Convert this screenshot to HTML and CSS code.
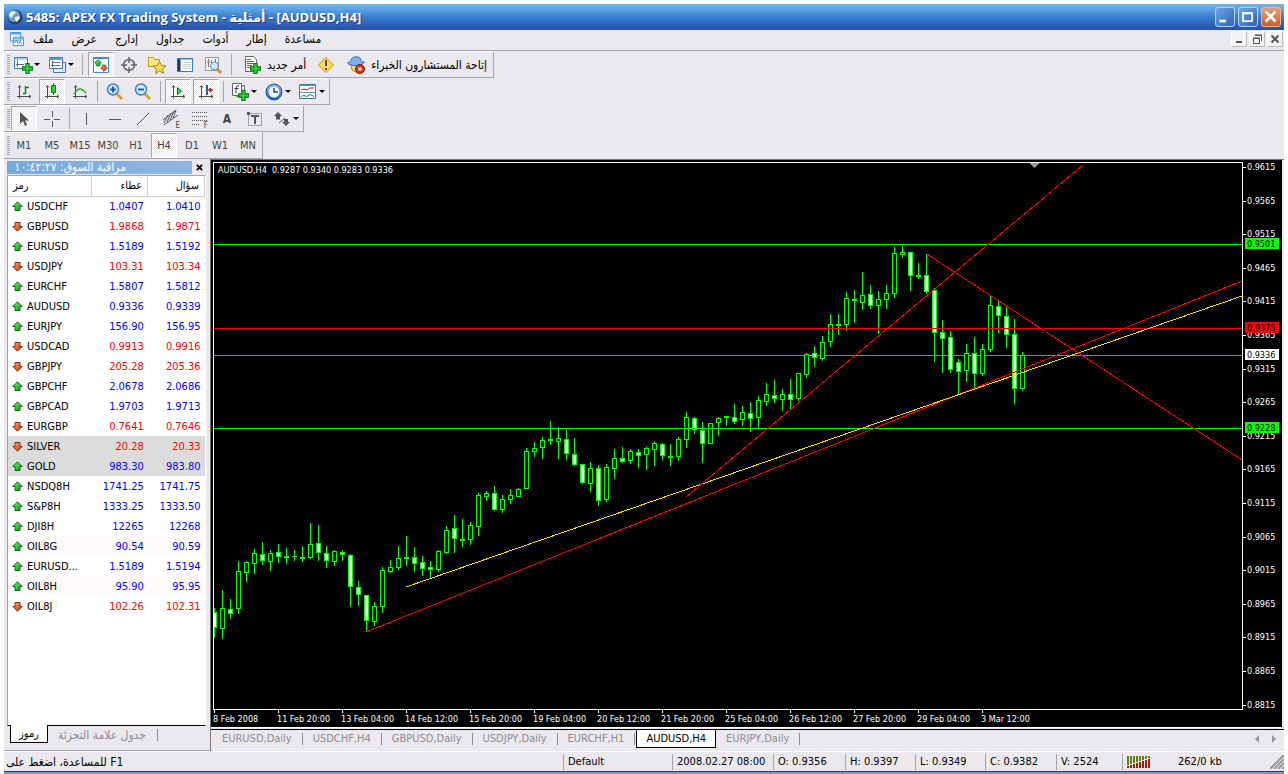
FILE: index.html
```html
<!DOCTYPE html>
<html lang="en">
<head>
    <meta charset="UTF-8">
    <meta name="viewport" content="width=device-width, initial-scale=1.0">
    <title>5485: APEX FX Trading System</title>
    <link rel="stylesheet" href="styles.css">
</head>
<body>
    <svg class="defs" aria-hidden="true">
        <defs>
            <linearGradient id="blueBall" x1="0" y1="0" x2="0" y2="1">
                <stop offset="0" stop-color="#8fc4f4"/>
                <stop offset="1" stop-color="#1c55b0"/>
            </linearGradient>
            <linearGradient id="greenFill" x1="0" y1="0" x2="1" y2="1">
                <stop offset="0" stop-color="#7df07d"/>
                <stop offset="1" stop-color="#009a10"/>
            </linearGradient>
            <linearGradient id="redFill" x1="0" y1="0" x2="1" y2="1">
                <stop offset="0" stop-color="#ffb070"/>
                <stop offset="1" stop-color="#c03000"/>
            </linearGradient>
            <symbol id="plus" viewBox="0 0 10 10"><path d="M3.5.5h3v3h3v3h-3v3h-3v-3h-3v-3h3z" fill="#2fd03a" stroke="#087a12"/></symbol>
            <symbol id="up" viewBox="0 0 11 11"><path d="M5.5.8L10.2 5.500H8v4H3v-4H.8z" fill="url(#greenFill)" stroke="#0a6a14"/></symbol>
            <symbol id="down" viewBox="0 0 11 11"><path d="M5.500 10.200L.8 5.500H3v-4h5v4h2.200z" fill="url(#redFill)" stroke="#8a2a10"/></symbol>
            <symbol id="axes" viewBox="0 0 20 20"><path d="M5.500 4v12.500M3 14.500h13M4 5.500l1.500-2 1.500 2M15 13l2 1.500-2 1.500" fill="none" stroke="#4a4a4a"/></symbol>
        </defs>
    </svg>

    <div class="window">
        <header class="titlebar">
            <svg class="globe" viewBox="0 0 16 16"><circle cx="8" cy="8" r="7.500" fill="#26425f"/><circle cx="7" cy="7" r="6" fill="#6f9fc8"/><path d="M3 3l4-1 2 2-3 2-1 3-3-2zM8 8l4-1 1 2-3 4-2-2z" fill="#e8f0ea"/></svg>
            <h1>5485: APEX FX Trading System - أمثلية - [AUDUSD,H4]</h1>
            <button class="win-btn" aria-label="Minimize"><svg viewBox="0 0 20 20"><path d="M4 13h7v3H4z" fill="#fff"/></svg></button>
            <button class="win-btn" aria-label="Maximize"><svg viewBox="0 0 20 20"><path d="M4.500 5.500h10v9h-10zM4 6h11" fill="none" stroke="#fff" stroke-width="2"/></svg></button>
            <button class="win-btn close" aria-label="Close"><svg viewBox="0 0 20 20"><path d="M4 4l11 11M15 4L4 15" stroke="#fff" stroke-width="3"/></svg></button>
        </header>

        <nav class="menubar">
            <svg class="doc-icon" viewBox="0 0 16 16"><path d="M1.500.5h11v9h-11zM4.500 5.500h11v9h-11z" fill="#fff" stroke="#3f86cc"/><path d="M1 2h11M5 7h11" stroke="#6bb0ee" stroke-width="2"/><path d="M6 12l2-3 2 4 2-3 2 3" fill="none" stroke="#3f86cc"/></svg>
            <button>ملف</button>
            <button>عرض</button>
            <button>إدارج</button>
            <button>جداول</button>
            <button>أدوات</button>
            <button>إطار</button>
            <button>مساعدة</button>
            <div class="mdi">
                <button aria-label="Minimize chart"><svg viewBox="0 0 14 14"><path d="M4 10h6" stroke="#555" stroke-width="2"/></svg></button>
                <button aria-label="Restore chart"><svg viewBox="0 0 14 14"><path d="M5 3.500h6.500V9M3.500 6.500h6v5h-6zM5 3h7M3 6h7" fill="none" stroke="#555"/></svg></button>
                <button aria-label="Close chart"><svg viewBox="0 0 14 14"><path d="M3.500 3.500l7 7M10.500 3.500l-7 7" stroke="#555" stroke-width="2"/></svg></button>
            </div>
        </nav>

        <div class="toolbars">
            <div class="toolbar standard">
                <button class="drop" aria-label="New chart"><svg viewBox="0 0 20 20"><path d="M1.500 2.500h13v11h-13z" fill="#fff" stroke="#3c78b4"/><path d="M1 4h14" stroke="#5b9bd8"/><path d="M4.500 5v7M3 9.500h8" stroke="#4d6f94"/><use href="#plus" x="9" y="8" width="11" height="11"/></svg></button>
                <button class="drop" aria-label="Profiles"><svg viewBox="0 0 20 20"><path d="M6.500 7.500h12v10h-12z" fill="#dcebfa" stroke="#3c78b4"/><path d="M2.500 2.500h13v11h-13z" fill="#fff" stroke="#3c78b4"/><path d="M2 4h14" stroke="#5b9bd8" stroke-width="2"/><path d="M5.500 6v6M4 10.500h9M5 7.500h8" stroke="#4d6f94"/></svg></button>
                <i class="sep"></i>
                <button class="on" aria-label="Market watch"><svg viewBox="0 0 20 20"><path d="M2.500 2.500h15v15h-15z" fill="#fff" stroke="#3c8ad8"/><path d="M2 3h16" stroke="#3c8ad8" stroke-width="2"/><use href="#up" x="3" y="4" width="8" height="8"/><use href="#down" x="9" y="9" width="8" height="8"/></svg></button>
                <button aria-label="Data window"><svg viewBox="0 0 20 20" fill="none" stroke="#666"><circle cx="10" cy="10" r="5.500" stroke-width="1.500"/><path d="M10 2v6M10 12v6M2 10h6M12 10h6" stroke-width="1.500"/></svg></button>
                <button aria-label="Navigator"><svg viewBox="0 0 20 20"><path d="M1.500 2.500h5l1 2h5v7h-11z" fill="#ffe98a" stroke="#b8962c"/><path d="M12.500 6.500l2 4 4.500.5-3.500 3 1 4.500-4-2.500-4 2.500 1-4.500-3.500-3 4.500-.5z" fill="#ffdc4e" stroke="#a88018"/></svg></button>
                <button aria-label="Terminal"><svg viewBox="0 0 20 20"><path d="M2.500 3.500h15v13h-15z" fill="#fff" stroke="#2f7fd0"/><path d="M4 4v12" stroke="#123a70" stroke-width="3"/><path d="M3 4h15" stroke="#2f7fd0"/><path d="M8 7.500h8M8 9.500h8M8 11.500h8M8 13.500h8" stroke="#bcd"/></svg></button>
                <button aria-label="Strategy tester"><svg viewBox="0 0 20 20"><path d="M2.500 2.500h13v13h-13z" fill="#f8f8f8" stroke="#999"/><path d="M5.500 4v8M8.500 5v6M4 7h3M12.500 4v4" stroke="#777"/><path d="M14 14l4 4" stroke="#d09030" stroke-width="3"/><circle cx="11.500" cy="11" r="4" fill="#cfe6fb" stroke="#5d88b4"/></svg></button>
                <i class="sep"></i>
                <button class="wide"><svg viewBox="0 0 20 20"><path d="M3.500 1.500h8l3 3v12h-11z" fill="#fff" stroke="#666"/><path d="M5 6.500h7M5 8.500h7M5 10.500h5M5 12.500h4M5 4.500h4" stroke="#666"/><use href="#plus" x="8" y="8" width="11" height="11"/></svg>أمر جديد</button>
                <button aria-label="Alerts"><svg viewBox="0 0 20 20"><path d="M10 2.500l7.500 7.500-7.500 7.500L2.500 10z" fill="#ffdf50" stroke="#c09020"/><path d="M10 5v6M10 13v2" stroke="#6a4a00" stroke-width="2"/></svg></button>
                <button class="wide"><svg viewBox="0 0 20 20"><path d="M5 9h11l-1 7-4 2-5-3z" fill="#ffd66a" stroke="#b08830"/><path d="M1.500 8c2-1 3-1 4-4 2-3 8-3 9 0 0 2 1 3 4 3-2 4-14 5-17 1z" fill="#7ab4ec" stroke="#3468a8"/><circle cx="14" cy="14" r="4.500" fill="#d8301c" stroke="#8a1408"/><path d="M12.500 12.500h3v3h-3z" fill="#fff"/></svg>إتاحة المستشارون الخبراء</button>
            </div>

            <div class="toolbar">
                <button aria-label="Bar chart"><svg viewBox="0 0 20 20"><use href="#axes" width="20" height="20"/><path d="M11.500 4v8M9 11.500h2.500M11.500 5.500H15" stroke="#0a8a14" stroke-width="1.500"/></svg></button>
                <button class="on" aria-label="Candlesticks"><svg viewBox="0 0 20 20"><use href="#axes" width="20" height="20"/><path d="M11.500 1v12" stroke="#0a6a14"/><path d="M9.500 3.500h4v7h-4z" fill="#1edc2c" stroke="#0a7a14"/></svg></button>
                <button aria-label="Line chart"><svg viewBox="0 0 20 20"><use href="#axes" width="20" height="20"/><path d="M4 12c4-6 7-7 12-1" fill="none" stroke="#2aa834" stroke-width="1.500"/></svg></button>
                <i class="sep"></i>
                <button aria-label="Zoom in"><svg viewBox="0 0 20 20"><path d="M12 12l5 5" stroke="#d8a040" stroke-width="3"/><circle cx="8" cy="7.500" r="5.500" fill="#d8ecff" stroke="#3b7fd0" stroke-width="1.500"/><path d="M5 7.500h6M8 4.500v6" stroke="#1d5cb8" stroke-width="2"/></svg></button>
                <button aria-label="Zoom out"><svg viewBox="0 0 20 20"><path d="M12 12l5 5" stroke="#d8a040" stroke-width="3"/><circle cx="8" cy="7.500" r="5.500" fill="#d8ecff" stroke="#3b7fd0" stroke-width="1.500"/><path d="M5 7.500h6" stroke="#1d5cb8" stroke-width="2"/></svg></button>
                <i class="sep"></i>
                <button class="on" aria-label="Auto scroll"><svg viewBox="0 0 20 20"><use href="#axes" width="20" height="20"/><path d="M9.500 5.500l4 3.500-4 3.500z" fill="#3cd048" stroke="#0a7a14"/></svg></button>
                <button class="on" aria-label="Chart shift"><svg viewBox="0 0 20 20"><use href="#axes" width="20" height="20"/><path d="M11 3v10" stroke="#2060b0" stroke-width="2"/><path d="M17 8h-4M15 6l-2 2 2 2" fill="none" stroke="#a03010" stroke-width="1.500"/></svg></button>
                <i class="sep"></i>
                <button class="drop" aria-label="Indicators"><svg viewBox="0 0 20 20"><path d="M6.500 3.500h8v11h-8z" fill="#ddd" stroke="#777"/><path d="M2.500 1.500h9v12h-9z" fill="#fff" stroke="#666"/><path d="M9 4c-3-1-3 1-3 7M4.500 6.500h4" fill="none" stroke="#333"/><use href="#plus" x="8" y="8" width="11" height="11"/></svg></button>
                <button class="drop" aria-label="Periods"><svg viewBox="0 0 20 20"><circle cx="10" cy="10" r="8" fill="url(#blueBall)" stroke="#1f4f98"/><circle cx="10" cy="10" r="5.500" fill="#eef6ff"/><path d="M10 6v4h4" fill="none" stroke="#345" stroke-width="1.500"/></svg></button>
                <button class="drop" aria-label="Templates"><svg viewBox="0 0 20 20"><path d="M1.500 2.500h16v14h-16z" fill="#fff" stroke="#3078c0"/><path d="M1 3.500h17M1 10.500h17" stroke="#4f98dc"/><path d="M3 8l3-1 3 1 3-2h4" fill="none" stroke="#a03010"/><path d="M3 14.500l3-1 3 1 3-2 4 2" fill="none" stroke="#0a9a24"/></svg></button>
            </div>

            <div class="toolbar">
                <button class="on" aria-label="Cursor"><svg viewBox="0 0 20 20"><path d="M6 3v12l3-3 2 5 2-1-2-4.500h4z" fill="#555"/></svg></button>
                <button aria-label="Crosshair"><svg viewBox="0 0 20 20"><path d="M10.500 2v6M10.500 12v6M2 10.500h6M12 10.500h6" stroke="#555"/></svg></button>
                <i class="sep"></i>
                <button aria-label="Vertical line"><svg viewBox="0 0 20 20"><path d="M9.500 4v12" stroke="#555"/></svg></button>
                <button aria-label="Horizontal line"><svg viewBox="0 0 20 20"><path d="M4 10.500h12" stroke="#555"/></svg></button>
                <button aria-label="Trendline"><svg viewBox="0 0 20 20"><path d="M4 16L16 4" stroke="#555"/></svg></button>
                <button aria-label="Channel"><svg viewBox="0 0 20 20"><path d="M2 11L15 1M3 16L17 6M3 14l4-8M6 13l4-9M9 11l4-9M12 9l3-8" stroke="#555"/></svg><sub>E</sub></button>
                <button aria-label="Fibonacci"><svg viewBox="0 0 20 20"><path d="M3 3.500h15M3 7.500h15M3 11.500h15M3 15.500h8" stroke="#555" stroke-dasharray="1 1"/></svg><sub>F</sub></button>
                <button class="glyph">A</button>
                <button aria-label="Text label"><svg viewBox="0 0 20 20"><path d="M3.500 4.500h13v12h-13z" fill="none" stroke="#555" stroke-dasharray="1 1"/><path d="M6 7h8M10 7v8" stroke="#555" stroke-width="2"/><path d="M2 3h3v3H2z" fill="#555"/></svg></button>
                <button class="drop" aria-label="Arrows"><svg viewBox="0 0 20 20"><path d="M6 3l4 4-2 .5v3H4v-3L2 7zM14 17l-4-4h2v-3h4v3h2z" fill="#555"/><path d="M7 14l6-5" stroke="#555"/></svg></button>
            </div>

            <div class="toolbar">
                <button>M1</button>
                <button>M5</button>
                <button>M15</button>
                <button>M30</button>
                <button>H1</button>
                <button class="on">H4</button>
                <button>D1</button>
                <button>W1</button>
                <button>MN</button>
            </div>
        </div>

        <main class="workspace">
            <section class="watch">
                <div class="watch-head">
                    <h2 dir="rtl">مراقبة السوق: ١٠:٤٢:٢٧</h2>
                    <button aria-label="Close panel"><svg viewBox="0 0 8 8"><path d="M1 1l6 6M7 1L1 7" stroke="#000" stroke-width="2"/></svg></button>
                </div>
                <div class="watch-list">
                    <table>
                        <thead>
                            <tr><th>رمز</th><th>عطاء</th><th>سؤال</th></tr>
                        </thead>
                        <tbody id="quotes"></tbody>
                    </table>
                </div>
                <div class="watch-tabs">
                    <button class="active">رموز</button>
                    <button>جدول علامة التجزئة</button>
                </div>
            </section>

            <section class="charts">
                <div class="chart">
                    <div class="plot">
                        <svg id="plot"></svg>
                        <p class="chart-title">AUDUSD,H4&nbsp; 0.9287 0.9340 0.9283 0.9336</p>
                    </div>
                    <svg id="prices" class="prices"></svg>
                    <svg id="times" class="times"></svg>
                </div>
                <div class="chart-tabs">
                    <button>EURUSD,Daily</button>
                    <button>USDCHF,H4</button>
                    <button>GBPUSD,Daily</button>
                    <button>USDJPY,Daily</button>
                    <button>EURCHF,H1</button>
                    <button class="active">AUDUSD,H4</button>
                    <button>EURJPY,Daily</button>
                    <svg class="scroll" viewBox="0 0 24 8"><path d="M5 0v8L1 4zM18 0v8l4-4z" fill="#999"/></svg>
                </div>
            </section>
        </main>

        <footer class="status">
            <span class="help">للمساعدة، اضغط على F1</span>
            <span>Default</span>
            <span>2008.02.27 08:00</span>
            <span>O: 0.9356</span>
            <span>H: 0.9397</span>
            <span>L: 0.9349</span>
            <span>C: 0.9382</span>
            <span>V: 2524</span>
            <span class="traffic">
                <svg class="bars" viewBox="0 0 24 12"><path d="M1 0v9M4 0v8M7 0v7M10 0v6M13 0v5M16 0v4M19 0v3M22 0v2" stroke="#5f7f10" stroke-width="2"/><path d="M1 10v2M4 9v3M7 8v4M10 7v5M13 6v6M16 5v7M19 4v8M22 3v9" stroke="#a02010" stroke-width="2"/></svg>
                262/0 kb
                <svg class="size-grip" viewBox="0 0 14 14"><path d="M0 14L14 0M4 14L14 4M8 14l6-6M12 14l2-2" stroke="#999" stroke-width="2"/></svg>
            </span>
        </footer>
    </div>
    <script src="chart.js"></script>
</body>
</html>
```
FILE: styles.css
```css
* {
    box-sizing: border-box;
}
body {
    margin: 0;
    background: #fff;
    font-family: "DejaVu Sans Condensed", "DejaVu Sans", sans-serif;
    font-size: 11px;
    color: #000;
}
h1, h2, p {
    margin: 0;
}
button {
    padding: 0;
    border: none;
    background: none;
    font: inherit;
    color: inherit;
}
svg {
    display: block;
}
.defs {
    position: absolute;
    width: 0;
    height: 0;
}
.window {
    display: flex;
    flex-direction: column;
    min-height: 100vh;
    padding: 4px 4px 0;
}

/* title bar */
.titlebar {
    display: flex;
    align-items: center;
    gap: 3px;
    height: 26px;
    padding: 0 3px;
    background: linear-gradient(#6fb6ea 0, #5ea4e4 20%, #3f83d4 45%, #3674c8 60%, #2c57b0 90%, #2a50a8 100%);
}
.titlebar .globe {
    width: 16px;
    height: 16px;
}
.titlebar h1 {
    flex: 1;
    font-family: "Open Sans", "DejaVu Sans", sans-serif;
    font-size: 13px;
    line-height: 24px;
    color: #fff;
    text-shadow: 1px 1px 0 #1c3c80;
    white-space: nowrap;
}
.win-btn {
    width: 20px;
    height: 20px;
    border: 1px solid #b8d4f4;
    border-radius: 3px;
    background: linear-gradient(135deg, #6ea6e4, #2e62b8);
}
.win-btn.close {
    background: linear-gradient(#e8a080, #d85828);
    border-color: #ffb090;
}

/* menu */
.menubar {
    display: flex;
    align-items: center;
    gap: 18px;
    height: 21px;
    padding: 0 0 2px 5px;
    background: #ebe9ed;
    border-bottom: 1px solid #a5a3a8;
    font-size: 12px;
}
.doc-icon {
    width: 15px;
    height: 15px;
    margin-right: -9px;
}
.mdi {
    display: flex;
    gap: 2px;
    margin-left: auto;
    padding-right: 1px;
}
.mdi button {
    width: 16px;
    height: 16px;
    border: 1px solid #fff;
    border-right-color: #bbb;
    border-bottom-color: #bbb;
    background: #f4f3f5;
}

/* toolbars */
.toolbars {
    background: #ebe9ed;
}
.toolbar {
    display: flex;
    align-items: center;
    width: max-content;
    height: 27px;
    border-top: 1px solid #fff;
    border-right: 1px solid #a5a3a8;
    border-bottom: 1px solid #a5a3a8;
    color: #444;
}
.toolbar::before {
    content: "";
    width: 3px;
    height: 19px;
    margin: 0 0 0 3px;
    background: repeating-linear-gradient(#a8a6aa 0 1px, #ebe9ed 1px 2px);
}
.toolbar button {
    display: flex;
    align-items: center;
    justify-content: center;
    position: relative;
    width: 28px;
    height: 25px;
    border: 1px solid transparent;
}
.toolbar button svg {
    width: 20px;
    height: 20px;
    flex: none;
}
.toolbar .on {
    border-color: #a5a3a8 #fff #fff #a5a3a8;
    background: repeating-conic-gradient(#fff 0 25%, #ebe9ed 0 50%) 0 0 / 2px 2px;
    width: 26px;
    margin: 0 1px;
}
.toolbar .drop {
    width: 34px;
    gap: 1px;
    justify-content: flex-start;
    padding-left: 2px;
}
.toolbar .drop::after {
    content: "";
    border: 3px solid transparent;
    border-top-color: #000;
    border-bottom: none;
}
.toolbar .wide {
    width: auto;
    gap: 5px;
    padding: 0 5px;
    font-size: 12px;
    color: #000;
}
.toolbar .glyph {
    font-size: 12px;
    font-weight: bold;
}
.toolbar sub {
    position: absolute;
    right: 4px;
    bottom: 0;
    font-size: 8px;
}
.sep {
    width: 1px;
    height: 21px;
    margin: 0 3px;
    background: #a5a3a8;
}
.standard .sep {
    margin: 0 4px;
}

/* market watch */
.workspace {
    display: flex;
    flex: 1;
    background: #ebe9ed;
}
.watch {
    display: flex;
    flex-direction: column;
    width: 206px;
    padding: 2px 4px 3px 3px;
    border-bottom: 1px solid #a5a3a8;
}
.watch-head {
    display: flex;
    align-items: center;
    height: 13px;
    margin-bottom: 1px;
}
.watch-head h2 {
    width: 185px;
    padding-right: 66px;
    background: linear-gradient(90deg, #76aadb, #8fb6e4);
    font-size: 12px;
    font-weight: normal;
    line-height: 13px;
    color: #fff;
    white-space: nowrap;
}
.watch-head button {
    margin-left: 4px;
}
.watch-head button svg {
    width: 7px;
    height: 7px;
}
.watch-list {
    flex: 1;
    border: 1px solid #a5a3a8;
    border-right-color: #fff;
    border-bottom-color: #000;
    background: #fff;
}
.watch table {
    width: 100%;
    border-collapse: collapse;
    table-layout: fixed;
}
.watch th {
    height: 20px;
    padding: 0 5px;
    border-right: 1px solid #d0d0d0;
    border-bottom: 1px solid #d0d0d0;
    font-weight: normal;
    text-align: right;
}
.watch th:first-child {
    width: 83px;
    text-align: left;
}
.watch td {
    height: 20px;
    padding: 0 4px;
    line-height: 13px;
    text-align: right;
}
.watch td:first-child {
    text-align: left;
}
.watch td svg {
    display: inline-block;
    width: 11px;
    height: 11px;
    margin-right: 4px;
    vertical-align: -2px;
}
.rise {
    color: #0000ff;
}
.fall {
    color: #ff0000;
}
.symbol {
    color: #000;
}
.picked {
    background: #dcdcdc;
}
.tint {
    background: #fffafa;
}
.watch-tabs {
    display: flex;
    height: 21px;
    font-size: 12px;
    color: #8c8a90;
}
.watch-tabs button {
    height: 12px;
    margin-top: 3px;
    padding: 0 11px 0 10px;
    border-right: 1px solid #8c8a90;
    line-height: 12px;
    white-space: nowrap;
}
.watch-tabs .active {
    height: 18px;
    margin-left: 3px;
    margin-top: -1px;
    padding: 0 8px;
    border: 1px solid #000;
    border-top: none;
    background: #fff;
    font-size: 11px;
    line-height: 18px;
    color: #000;
}

/* chart */
.charts {
    flex: 1;
    display: flex;
    flex-direction: column;
    min-width: 0;
    border-left: 1px solid #77757c;
    border-top: 1px solid #77757c;
}
.chart {
    flex: 1;
    display: grid;
    grid-template-columns: 1fr 39px;
    grid-template-rows: minmax(548px, 1fr) 17px;
    margin-right: 2px;
    padding: 2px 0 0 2px;
    background: #000;
    border-bottom: 1px solid #fff;
}
.plot {
    position: relative;
    border: 1px solid #fff;
    overflow: hidden;
}
.plot svg {
    position: absolute;
    width: 100%;
    height: 100%;
}
.chart-title {
    position: relative;
    padding: 2px 4px;
    font-size: 9px;
    color: #fff;
}
.prices, .times {
    width: 100%;
    height: 100%;
    overflow: visible;
    font-size: 9px;
    fill: #fff;
}
.chart-tabs {
    display: flex;
    align-items: center;
    height: 22px;
    border-top: 1px solid #000;
    margin-top: 1px;
    padding: 0 0 3px 1px;
    color: #8c8a90;
}
.chart-tabs button {
    height: 12px;
    padding: 0 10px;
    border-right: 1px solid #8c8a90;
    line-height: 12px;
}
.chart-tabs .active {
    height: 18px;
    margin-left: 1px;
    padding: 0 9px;
    border: 1px solid #000;
    border-top: none;
    background: #fff;
    color: #000;
}
.chart-tabs .scroll {
    width: 24px;
    height: 8px;
    margin-left: auto;
    margin-right: 6px;
}

/* status bar */
.status {
    display: grid;
    grid-template-columns: 1fr 109px 101px 72px 70px 70px 71px 66px 162px;
    align-items: center;
    height: 24px;
    background: #ebe9ed;
    border-top: 1px solid #fff;
    border-bottom: 3px solid #6e9cd0;
    box-shadow: inset 0 -1px 0 #24406a;
}
.status span {
    height: 16px;
    padding-left: 4px;
    border-left: 1px solid #a5a3a8;
    line-height: 16px;
    white-space: nowrap;
}
.status .help {
    padding-left: 2px;
    border: none;
    font-size: 12px;
}
.status .traffic {
    display: flex;
    align-items: center;
    gap: 27px;
}
.bars {
    width: 24px;
    height: 12px;
}
.size-grip {
    width: 14px;
    height: 14px;
    margin-left: auto;
}
```
FILE: chart.js
```js
const quotes = [
    ['USDCHF', '1.0407', '1.0410', 1],
    ['GBPUSD', '1.9868', '1.9871', 0],
    ['EURUSD', '1.5189', '1.5192', 1],
    ['USDJPY', '103.31', '103.34', 0],
    ['EURCHF', '1.5807', '1.5812', 1],
    ['AUDUSD', '0.9336', '0.9339', 1],
    ['EURJPY', '156.90', '156.95', 1],
    ['USDCAD', '0.9913', '0.9916', 0],
    ['GBPJPY', '205.28', '205.36', 0],
    ['GBPCHF', '2.0678', '2.0686', 1],
    ['GBPCAD', '1.9703', '1.9713', 1],
    ['EURGBP', '0.7641', '0.7646', 0],
    ['SILVER', '20.28', '20.33', 0, 'picked'],
    ['GOLD', '983.30', '983.80', 1, 'picked'],
    ['NSDQ8H', '1741.25', '1741.75', 1],
    ['S&amp;P8H', '1333.25', '1333.50', 1],
    ['DJI8H', '12265', '12268', 1],
    ['OIL8G', '90.54', '90.59', 1, 'tint'],
    ['EURUSD...', '1.5189', '1.5194', 1],
    ['OIL8H', '95.90', '95.95', 1, 'tint'],
    ['OIL8J', '102.26', '102.31', 0]
];

document.getElementById('quotes').innerHTML = quotes.map(([name, bid, ask, up, mark]) =>
    `<tr class="${up ? 'rise' : 'fall'} ${mark || ''}">
        <td class="symbol"><svg><use href="#${up ? 'up' : 'down'}"/></svg>${name}</td>
        <td>${bid}</td><td>${ask}</td>
    </tr>`).join('');

// high, body top, body bottom, low, falling
const candles = [
    [608,612,628,638,1],[590,608,629,639,0],[599,609,614,619,1],[561,571,609,614,0],
    [561,562,573,582,0],[549,553,564,574,0],[542,554,561,565,1],[550,553,562,571,0],
    [544,552,557,563,1],[548,556,558,564,0],[550,556,557,561,0],[546,557,559,562,0],
    [523,544,558,559,0],[525,543,553,561,1],[546,553,561,568,1],[550,551,562,566,0],
    [550,552,555,561,1],[554,555,587,607,1],[581,587,595,606,1],[595,595,621,632,1],
    [602,606,622,626,0],[567,570,607,613,0],[560,567,572,573,0],[546,558,568,570,0],
    [536,557,559,566,0],[547,557,564,572,1],[556,562,569,576,1],[561,567,570,579,1],
    [550,551,570,572,0],[526,530,553,554,0],[515,528,539,553,1],[519,539,541,547,0],
    [522,525,540,545,0],[493,495,527,536,0],[491,493,497,501,0],[486,493,510,511,1],
    [495,499,510,513,0],[489,495,500,504,0],[488,489,497,497,0],[448,451,489,489,0],
    [442,448,452,457,0],[437,440,448,459,0],[421,439,441,445,0],[427,438,442,459,0],
    [430,439,454,460,1],[438,454,465,466,1],[464,464,483,484,1],[462,468,484,492,0],
    [465,468,501,506,1],[464,467,500,502,0],[449,458,469,479,0],[447,458,462,463,1],
    [449,451,461,464,0],[449,452,456,468,1],[447,448,455,470,0],[441,443,450,466,0],
    [443,444,456,460,1],[444,456,458,466,0],[437,439,457,461,0],[412,417,440,448,0],
    [417,418,430,434,1],[422,430,444,463,1],[423,423,444,444,0],[417,418,423,436,0],
    [416,416,418,426,0],[404,417,422,424,1],[406,412,420,426,0],[402,413,419,432,1],
    [396,400,418,428,0],[383,394,402,406,0],[380,395,399,403,1],[389,394,400,411,0],
    [379,394,400,409,1],[373,373,399,401,0],[353,354,375,378,0],[346,353,358,367,1],
    [336,342,359,361,0],[314,324,342,347,0],[314,324,326,335,0],[292,298,325,331,0],
    [290,299,301,323,0],[272,295,303,310,0],[285,294,306,309,1],[291,299,306,334,0],
    [285,293,300,309,0],[247,253,294,298,0],[246,252,255,258,0],[252,252,276,291,1],
    [263,275,277,279,0],[254,275,292,294,1],[288,290,333,362,1],[320,332,339,373,1],
    [331,337,370,373,1],[359,362,372,394,1],[344,353,371,382,0],[337,353,374,388,1],
    [344,349,374,376,0],[296,305,350,352,0],[301,306,316,333,1],[307,316,335,348,1],
    [319,334,389,404,1],[352,355,389,391,0]
];
const TOP = 163;
const STEP = 8;

const levels = [
    [244, '#00ff00', '0.9501'],
    [328, '#ff0000', '0.9375'],
    [428, '#00ff00', '0.9228']
];
const current = [355, '#778899', '0.9336'];

// x1, y1, x2, y2 measured from the plot corner
const trends = [
    [152, 469, 1028, 118, '#ff0000'],
    [192, 424, 1028, 133, '#ffd700'],
    [472, 334, 869, 2, '#ff0000'],
    [713, 91, 1028, 297, '#ff0000']
];

function rect(x, y, w, h, fill) {
    return `<rect x="${x}" y="${y}" width="${w}" height="${h}" fill="${fill}"/>`;
}

function drawPlot() {
    let out = rect(0, current[0] - TOP, '100%', 1, current[1]);
    candles.forEach(([high, top, bottom, low, falling], i) => {
        const x = i * STEP;
        out += rect(x, high - TOP, 1, low - high, '#00ff00');
        out += rect(x - 2, top - TOP, 5, bottom - top, '#00ff00');
        if (bottom - top > 2) {
            out += rect(x - 1, top - TOP + 1, 3, bottom - top - 2, falling ? '#fff' : '#000');
        }
    });
    levels.forEach(([y, color]) => out += rect(0, y - TOP, '100%', 1, color));
    trends.forEach(([x1, y1, x2, y2, color]) => {
        out += `<line x1="${x1}" y1="${y1}" x2="${x2}" y2="${y2}" stroke="${color}"/>`;
    });
    out += '<path d="M815 0h11l-5.500 5z" fill="#999"/>';
    document.getElementById('plot').innerHTML = `<g shape-rendering="crispEdges">${out}</g>`;
}

function drawPrices() {
    let out = '';
    for (let i = 0; i < 17; i++) {
        const y = Math.round(5 + i * 33.6);
        out += rect(0, y, 3, 1, '#fff');
        out += `<text x="4" y="${y + 3}">${(0.9615 - i * 0.005).toFixed(4)}</text>`;
    }
    [...levels, [current[0], '#fff', current[2]]].forEach(([y, color, label]) => {
        out += rect(2, y - TOP - 5, 34, 11, color);
        out += `<text x="4" y="${y - TOP + 4}" fill="#000">${label}</text>`;
    });
    document.getElementById('prices').innerHTML = out;
}

function drawTimes() {
    const labels = ['8 Feb 2008', '11 Feb 20:00', '13 Feb 04:00', '14 Feb 12:00', '15 Feb 20:00',
        '19 Feb 04:00', '20 Feb 12:00', '21 Feb 20:00', '25 Feb 04:00', '26 Feb 12:00',
        '27 Feb 20:00', '29 Feb 04:00', '3 Mar 12:00'];
    document.getElementById('times').innerHTML = labels.map((label, i) =>
        rect(1 + i * 64, 0, 1, 3, '#fff') + `<text x="${i * 64}" y="12">${label}</text>`).join('');
}

drawPlot();
drawPrices();
drawTimes();
```
